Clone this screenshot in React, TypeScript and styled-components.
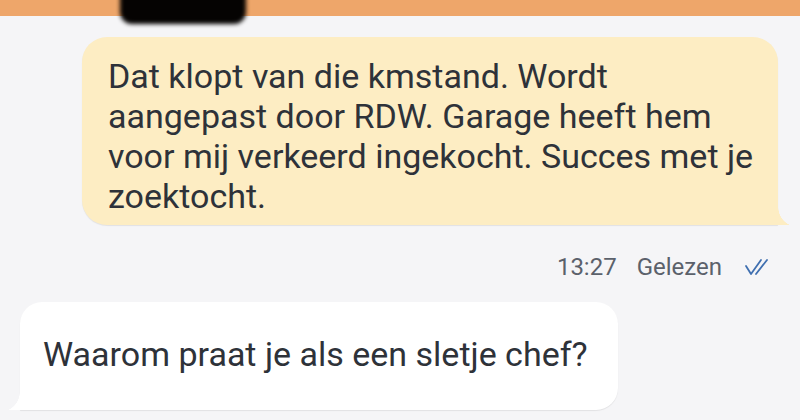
import React from "react";
import styled, { createGlobalStyle } from "styled-components";

const Global = createGlobalStyle`
  html, body { margin: 0; padding: 0; background: #f5f5f7; }
  body { font-family: Roboto, "Noto Sans", "Liberation Sans", sans-serif; -webkit-font-smoothing: antialiased; }
`;

const Screen = styled.div`
  position: relative;
  width: 800px;
  height: 420px;
  overflow: hidden;
  background: #f5f5f7;
  display: flex;
  flex-direction: column;
`;

const TopBar = styled.div`
  height: 16px;
  flex: none;
  background: #eea66a;
`;

const Redaction = styled.div`
  position: absolute;
  left: 120px;
  top: -14px;
  width: 126px;
  height: 38px;
  background: #050302;
  border-radius: 12px;
  filter: blur(2px);
`;

const Chat = styled.div`
  display: flex;
  flex-direction: column;
`;

const OutRow = styled.div`
  display: flex;
  justify-content: flex-end;
  padding: 21px 22px 0 82px;
`;

const Bubble = styled.div<{ $out?: boolean }>`
  position: relative;
  background: ${(p) => (p.$out ? "#fdedc3" : "#ffffff")};
  color: #2e3239;
  font-size: 34px;
  line-height: 40px;
  white-space: nowrap;
  box-shadow: 0 1px 1px rgba(0, 0, 0, 0.08);
  border-radius: ${(p) => (p.$out ? "25px 25px 0 25px" : "22px 22px 22px 0")};
  padding: ${(p) => (p.$out ? "19px 20px 9px 26px" : "32px 30px 36px 23px")};
  flex: ${(p) => (p.$out ? "1" : "none")};
  &::after {
    content: "";
    position: absolute;
    bottom: 0;
    width: 20px;
    height: 18px;
    ${(p) =>
      p.$out
        ? `right: -20px;
           background: radial-gradient(circle at 100% 0, transparent 19.5px, #fdedc3 20px);`
        : `left: -20px;
           background: radial-gradient(circle at 0 0, transparent 19.5px, #ffffff 20px);`}
  }
`;

const Meta = styled.div`
  display: flex;
  justify-content: flex-end;
  align-items: center;
  gap: 20px;
  padding: 28px 28px 0 0;
  height: 28px;
  font-size: 24px;
  color: #5b616b;
`;

const Ticks = styled.svg`
  width: 28px;
  height: 18px;
  margin-left: 2px;
`;

const InRow = styled.div`
  display: flex;
  justify-content: flex-start;
  padding: 21px 0 0 20px;
`;

export default function App() {
  return (
    <>
      <Global />
      <Screen>
        <TopBar />
        <Redaction />
        <Chat>
          <OutRow>
            <Bubble $out>
              Dat klopt van die kmstand. Wordt
              <br />
              aangepast door RDW. Garage heeft hem
              <br />
              voor mij verkeerd ingekocht. Succes met je
              <br />
              zoektocht.
            </Bubble>
          </OutRow>
          <Meta>
            <span>13:27</span>
            <span>Gelezen</span>
            <Ticks viewBox="0 0 28 18" fill="none" stroke="#3f6fb0" strokeWidth="1.8" strokeLinecap="round" strokeLinejoin="round">
              <path d="M2 8 L7 16 L17 2" />
              <path d="M12 16 L23 2" />
            </Ticks>
          </Meta>
          <InRow>
            <Bubble>Waarom praat je als een sletje chef?</Bubble>
          </InRow>
        </Chat>
      </Screen>
    </>
  );
}
